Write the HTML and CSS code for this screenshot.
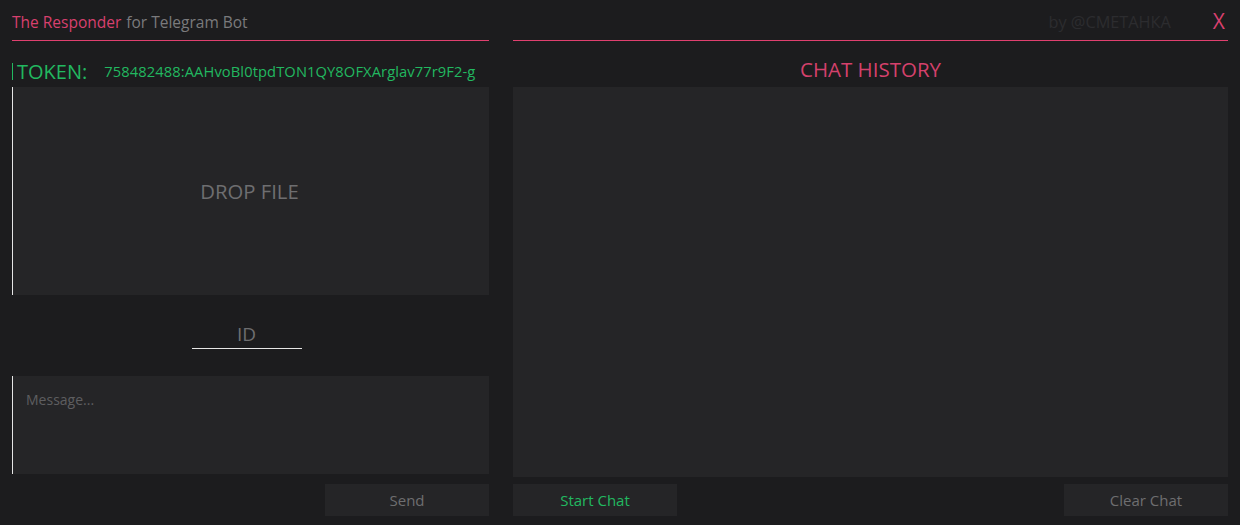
FILE: index.html
```html
<!DOCTYPE html>
<html>
<head>
<meta charset="utf-8">
<link rel="stylesheet" href="styles.css">
</head>
<body>
<div class="app">
  <div class="col left">
    <div class="header">
      <span class="brand">The Responder</span> <span class="sub">for Telegram Bot</span>
    </div>
    <div class="token-row">
      <span class="token-label">TOKEN:</span>
      <span class="token-value">758482488:AAHvoBl0tpdTON1QY8OFXArglav77r9F2-g</span>
    </div>
    <div class="drop">DROP FILE</div>
    <div class="id-row"><div class="id-field">ID</div></div>
    <div class="message">Message...</div>
    <div class="btn-row end"><div class="btn">Send</div></div>
  </div>
  <div class="col right">
    <div class="header rheader">
      <span class="by">by @СМЕТАНКА</span>
      <span class="close">X</span>
    </div>
    <div class="chat-title">CHAT HISTORY</div>
    <div class="chat"></div>
    <div class="btn-row between">
      <div class="btn green">Start Chat</div>
      <div class="btn">Clear Chat</div>
    </div>
  </div>
</div>
</body>
</html>
```
FILE: styles.css
```css
html, body {
  margin: 0;
  padding: 0;
  background: #1c1c1e;
  height: 525px;
  overflow: hidden;
}
body {
  font-family: "Open Sans", "Noto Sans", sans-serif;
}
.app {
  display: flex;
  gap: 24px;
  padding: 0 12px;
}
.col {
  display: flex;
  flex-direction: column;
}
.left { width: 477px; }
.right { width: 715px; }
.header {
  height: 41px;
  box-sizing: border-box;
  border-bottom: 1px solid #e0406f;
  display: flex;
  align-items: center;
  gap: 5px;
  font-size: 15.5px;
  padding-top: 4px;
}
.brand { color: #d8406e; }
.sub { color: #7a7a7c; }
.rheader {
  justify-content: flex-end;
  gap: 0;
}
.by {
  color: #2c2c2f;
  font-size: 16.3px;
  margin-right: 42px;
}
.close {
  color: #d8406e;
  font-size: 21px;
  margin-right: 3px;
  margin-top: -2px;
}
.token-row {
  height: 46px;
  display: flex;
  align-items: center;
  box-sizing: border-box;
  padding-top: 14px;
}
.token-label {
  color: #22b860;
  font-size: 20px;
  border-left: 1px solid #22b860;
  padding-left: 4px;
  line-height: 17px;
  margin-right: 17px;
}
.token-value {
  color: #22b860;
  font-size: 14.7px;
  letter-spacing: 0.1px;
}
.drop {
  height: 208px;
  background: #252527;
  border-left: 1px solid #e6e6e6;
  display: flex;
  align-items: center;
  justify-content: center;
  color: #6e6e70;
  font-size: 20.3px;
  padding-right: 3px;
}
.id-row {
  height: 81px;
  display: flex;
  justify-content: center;
  padding-top: 25px;
  box-sizing: border-box;
}
.id-field {
  width: 110px;
  height: 29px;
  border-bottom: 1px solid #e6e6e6;
  color: #6e6e70;
  font-size: 19px;
  text-align: center;
  line-height: 28px;
  box-sizing: border-box;
  margin-right: 8px;
}
.message {
  height: 98px;
  background: #252527;
  border-left: 1px solid #e6e6e6;
  color: #5e5e60;
  font-size: 14px;
  padding: 14px 0 0 13px;
  box-sizing: border-box;
}
.btn-row {
  display: flex;
  margin-top: 10px;
}
.end { justify-content: flex-end; }
.between { justify-content: space-between; margin-top: 7px; }
.btn {
  width: 164px;
  height: 32px;
  background: #252527;
  color: #6e6e70;
  font-size: 15px;
  display: flex;
  align-items: center;
  justify-content: center;
}
.green { color: #22b860; }
.chat-title {
  height: 46px;
  color: #d4416c;
  font-size: 20.5px;
  display: flex;
  align-items: center;
  justify-content: center;
  padding-top: 10px;
  box-sizing: border-box;
}
.chat {
  height: 390px;
  background: #252527;
}
```
